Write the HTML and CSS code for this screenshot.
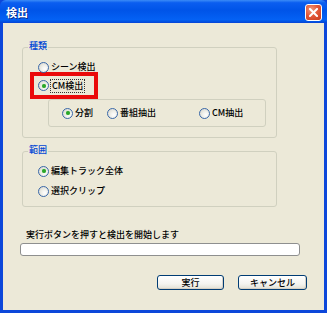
FILE: index.html
```html
<!DOCTYPE html>
<html lang="ja">
<head>
  <meta charset="UTF-8" />
  <title>検出</title>
  <link rel="stylesheet" href="styles.css">
</head>
<body>
  <div class="window">
    <div class="titlebar">
      <span class="title">検出</span>
      <button class="close" type="button" aria-label="閉じる">
        <svg width="9" height="9" viewBox="0 0 9 9">
          <path d="M1 1 L8 8 M8 1 L1 8" stroke="#fff" stroke-width="2" stroke-linecap="square" />
        </svg>
      </button>
    </div>

    <div class="dialog">
      <fieldset class="group group-kind">
        <legend>種類</legend>
        <label class="option"><span class="radio"></span>シーン検出</label>
        <label class="option marked"><span class="radio checked"></span><span class="focus">CM検出</span></label>
        <div class="subgroup">
          <label class="option opt-split"><span class="radio checked"></span>分割</label>
          <label class="option opt-program"><span class="radio"></span>番組抽出</label>
          <label class="option"><span class="radio"></span>CM抽出</label>
        </div>
      </fieldset>

      <fieldset class="group group-range">
        <legend>範囲</legend>
        <label class="option"><span class="radio checked"></span>編集トラック全体</label>
        <label class="option"><span class="radio"></span>選択クリップ</label>
      </fieldset>

      <p class="status">実行ボタンを押すと検出を開始します</p>
      <div class="progress"></div>

      <div class="buttons">
        <button type="button" class="btn btn-run">実行</button>
        <button type="button" class="btn btn-cancel">キャンセル</button>
      </div>
    </div>
  </div>
</body>
</html>
```

FILE: styles.css
```css
* {
  box-sizing: border-box;
}
body {
  margin: 0;
  background: #fff;
  font-family: 'Noto Sans CJK JP', 'DejaVu Sans', sans-serif;
  font-size: 9px;
  font-weight: 500;
  color: #000;
}
.window {
  width: 327px;
  height: 313px;
  background: #0c47da;
  display: flex;
  flex-direction: column;
  padding: 0 3px 3px 3px;
}
.titlebar {
  height: 23px;
  margin: 0 -3px;
  display: flex;
  align-items: center;
  justify-content: space-between;
  padding: 0 5px 0 6px;
  background: linear-gradient(to bottom, #3b8cf7 0%, #0b5ef0 12%, #0054e8 45%, #0461f4 85%, #0050e0 95%, #0940d4 100%);
  border-radius: 6px 6px 0 0;
}
.title {
  color: #fff;
  font-size: 11px;
  font-weight: 700;
  line-height: 12px;
  text-shadow: 1px 1px 0 #0a2b8c;
  margin-top: 1px;
}
.close {
  width: 17px;
  height: 17px;
  padding: 0;
  border: 1px solid #fff;
  border-radius: 3px;
  background: radial-gradient(circle at 35% 30%, #f29a7c 0%, #e3593a 45%, #c73a1c 100%);
  display: flex;
  align-items: center;
  justify-content: center;
  margin-top: 2px;
}
.dialog {
  flex: 1;
  background: #ece9d8;
  padding: 17px 17px 0 14px;
  display: flex;
  flex-direction: column;
}
.group {
  margin: 0 30px 0 5px;
  border: 1px solid #d0d0bf;
  border-radius: 3px;
  padding: 4px 10px 10px 15px;
  min-width: 0;
}
.group legend {
  color: #0046d5;
  line-height: 12px;
  padding: 0 1px 2px 1px;
  margin-left: -10px;
}
.group-range {
  margin-top: 6px;
  padding-top: 3px;
  padding-bottom: 5px;
}
.option {
  display: flex;
  align-items: center;
  height: 18px;
  line-height: 12px;
  white-space: nowrap;
}
.group-range .option {
  height: 20px;
}
.radio {
  width: 11px;
  height: 11px;
  flex: none;
  border: 1px solid #3a68a8;
  border-radius: 50%;
  background: radial-gradient(circle at 65% 65%, #ffffff 0%, #f0f0ea 40%, #d3d2c8 100%);
  margin-right: 2px;
  position: relative;
}
.radio.checked::after {
  content: '';
  position: absolute;
  left: 2.5px;
  top: 2.5px;
  width: 4px;
  height: 4px;
  border-radius: 50%;
  background: #2aa62a;
  box-shadow: 0 0 1px #7fd07f;
}
.marked {
  width: 60px;
  height: 19px;
  margin-left: -4px;
  padding-left: 4px;
  outline: 4px solid #ea0a0a;
}
.focus {
  outline: 1px dotted #333;
  padding: 0 1px;
}
.subgroup {
  margin: 4px 0 0 10px;
  height: 28px;
  border: 1px solid #d0d0bf;
  border-radius: 3px;
  display: flex;
  align-items: center;
  padding-left: 13px;
}
.opt-split {
  width: 45px;
}
.opt-program {
  width: 92px;
}
.status {
  margin: 22px 0 0 9px;
  line-height: 12px;
}
.progress {
  margin-top: 2px;
  height: 13px;
  margin-left: 3px;
  margin-right: 7px;
  background: #fff;
  border: 1px solid #8e8f8f;
  border-radius: 3px;
}
.buttons {
  margin-top: 19px;
  display: flex;
  justify-content: flex-end;
  gap: 14px;
}
.btn {
  height: 15px;
  padding: 0;
  font-family: inherit;
  font-size: 9px;
  font-weight: 500;
  line-height: 12px;
  color: #000;
  border: 1px solid #003c74;
  border-radius: 3px;
  background: linear-gradient(to bottom, #ffffff 0%, #f4f4f0 60%, #e2e0d4 100%);
  box-shadow: inset -1px -1px 0 #d6d0c5;
}
.btn-run {
  width: 67px;
}
.btn-cancel {
  width: 69px;
}
```
